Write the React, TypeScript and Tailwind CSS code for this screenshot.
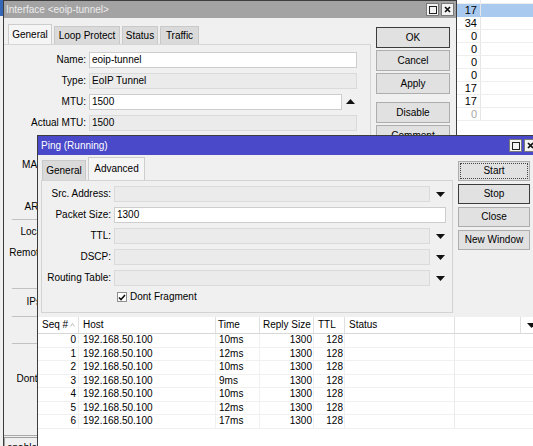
import React from 'react';

const font = "font-['Liberation_Sans',Arial,sans-serif]";

function WinControls() {
  return (
    <div className="flex gap-[2px]">
      <div className="w-[13px] h-[13px] bg-[#f3f3f3] border border-[#7a7a7a] flex items-center justify-center">
        <div className="w-[8px] h-[8px] border border-[#222]" />
      </div>
      <div className="w-[13px] h-[13px] bg-[#f3f3f3] border border-[#7a7a7a] flex items-center justify-center">
        <svg width="7" height="7" viewBox="0 0 7 7">
          <path d="M1 1L6 6M6 1L1 6" stroke="#111" strokeWidth="1.7" />
        </svg>
      </div>
    </div>
  );
}

function DownArrow() {
  return (
    <svg width="9" height="5" viewBox="0 0 9 5">
      <path d="M0 0h9L4.5 5z" fill="#111" />
    </svg>
  );
}

function Btn({ label, kind = 'normal', h = 'h-[21px]' }: { label: string; kind?: 'normal' | 'default' | 'focus'; h?: string }) {
  const border = kind === 'default' ? 'border-[#3c3c3c]' : 'border-[#adadad]';
  return (
    <div className={`${h} bg-[#e1e1e1] border ${border} flex items-center justify-center p-[1px]`}>
      {kind === 'focus' ? (
        <div className="w-full h-full border border-dotted border-[#444] flex items-center justify-center">{label}</div>
      ) : (
        label
      )}
    </div>
  );
}

function Field({ value = '', w, white = false }: { value?: string; w: string; white?: boolean }) {
  return (
    <div
      className={`${w} h-[16px] flex items-center px-[2px] border ${
        white ? 'bg-white border-[#cdcdcd]' : 'bg-[#ebebeb] border-[#dadada]'
      }`}
    >
      {value}
    </div>
  );
}

const sideRows = [
  { v: '17', sel: true },
  { v: '34' },
  { v: '0' },
  { v: '0' },
  { v: '0' },
  { v: '0' },
  { v: '17' },
  { v: '17' },
  { v: '0', dim: true },
];

function SideList() {
  return (
    <div className="absolute left-[457px] top-0 w-[76px] h-[140px] bg-white flex flex-col text-[11px]">
      <div className="h-[4px] border-b border-[#eeeeee] flex">
        <div className="w-[24px] border-r border-[#e6e6e6]" />
      </div>
      {sideRows.map((r, i) => (
        <div key={i} className={`flex h-[13px] border-b ${r.sel ? 'bg-[#a9c9ef] border-[#a9c9ef]' : 'border-[#eeeeee]'}`}>
          <div
            className={`w-[24px] flex items-center justify-end pr-[3px] border-r border-[#e6e6e6] ${
              r.dim ? 'text-[#a8a8a8]' : ''
            }`}
          >
            {r.v}
          </div>
        </div>
      ))}
    </div>
  );
}

function Row({ label = '', children }: { label?: string; children?: React.ReactNode }) {
  return (
    <div className="flex items-center h-[21px]">
      <div className="w-[82px] text-right whitespace-nowrap">{label}</div>
      <div className="ml-[3px] flex items-center">{children}</div>
    </div>
  );
}

function Sep({ pt }: { pt: string }) {
  return (
    <div className={`h-[7px] ${pt}`}>
      <div className="ml-[8px] w-[352px] border-t border-[#c2c2c2]" />
    </div>
  );
}

function InterfaceWindow() {
  return (
    <div className="absolute left-[3px] top-0 w-[454px] h-[460px] border border-[#3d3d3d] bg-[#f0f0f0] flex flex-col">
      <div className="h-[17px] shrink-0 bg-[#a3a3a3] flex items-center pl-[2px] pr-[2px]">
        <span className="flex-1 text-[#ececec]">Interface &lt;eoip-tunnel&gt;</span>
        <WinControls />
      </div>
      <div className="flex">
        <div className="flex-1 flex flex-col">
          <div className="mt-[6px] h-[20px] flex items-end gap-[2px] pl-[4px]">
            <div className="w-[44px] h-[20px] bg-[#f5f5f5] border border-b-0 border-[#cdcdcd] flex items-center justify-center">General</div>
            <div className="w-[66px] h-[18px] bg-[#dadada] border border-b-0 border-[#c9c9c9] flex items-center justify-center">Loop Protect</div>
            <div className="w-[36px] h-[18px] bg-[#dadada] border border-b-0 border-[#c9c9c9] flex items-center justify-center">Status</div>
            <div className="w-[39px] h-[18px] bg-[#dadada] border border-b-0 border-[#c9c9c9] flex items-center justify-center">Traffic</div>
          </div>
          <div className="mr-[5px] border-t border-r border-[#d6d6d6] pt-[4px] flex flex-col">
            <Row label="Name:">
              <Field w="w-[268px]" white value="eoip-tunnel" />
            </Row>
            <Row label="Type:">
              <Field w="w-[268px]" value="EoIP Tunnel" />
            </Row>
            <Row label="MTU:">
              <Field w="w-[253px]" white value="1500" />
              <div className="w-[16px] flex justify-center">
                <svg width="9" height="5" viewBox="0 0 9 5">
                  <path d="M0 5h9L4.5 0z" fill="#111" />
                </svg>
              </div>
            </Row>
            <Row label="Actual MTU:">
              <Field w="w-[268px]" value="1500" />
            </Row>
            {/* rows below sit behind the Ping window; only their label starts show */}
            <Row />
            <Row label="MAC Address:" />
            <Row />
            <Row label="ARP Timeout:" />
            <div className="h-[4px] pt-[2px]">
              <div className="ml-[8px] w-[352px] border-t border-[#c2c2c2]" />
            </div>
            <Row label="Local Address:" />
            <Row label="Remote Address:" />
            <Row />
            <Sep pt="pt-[4px]" />
            <Row label="IPsec Secret:" />
            <Sep pt="pt-[4px]" />
            <Row />
            <Sep pt="pt-[3px]" />
            <Row />
            <Row label="Dont Fragment:" />
          </div>
        </div>
        <div className="w-[74px] mr-[6px] mt-[9px] flex flex-col gap-[2px]">
          <Btn label="OK" kind="default" />
          <Btn label="Cancel" />
          <Btn label="Apply" />
          <div className="mt-[6px]">
            <Btn label="Disable" />
          </div>
          <Btn label="Comment" />
        </div>
      </div>
      <div className="mt-auto h-[24px] border-t border-[#a8a8a8] pt-[1px]">
        <div className="w-[34px] h-[20px] border border-[#a0a0a0] pl-[2px] pt-[5px] overflow-hidden">enabled</div>
      </div>
    </div>
  );
}

const pings = [
  { s: '0', t: '10ms' },
  { s: '1', t: '12ms' },
  { s: '2', t: '10ms' },
  { s: '3', t: '9ms' },
  { s: '4', t: '10ms' },
  { s: '5', t: '12ms' },
  { s: '6', t: '17ms' },
];

function PingRow({ label, children }: { label: string; children: React.ReactNode }) {
  return (
    <div className="flex items-center h-[16px]">
      <div className="w-[69px] text-right whitespace-nowrap">{label}</div>
      <div className="ml-[3px] flex items-center">{children}</div>
    </div>
  );
}

function Combo() {
  return (
    <>
      <Field w="w-[316px]" />
      <div className="w-[20px] flex justify-center">
        <DownArrow />
      </div>
    </>
  );
}

function PingWindow() {
  return (
    <div className="absolute left-[37px] top-[135px] w-[510px] h-[330px] border border-[#3d3d3d] bg-[#f0f0f0] flex flex-col">
      <div className="h-[19px] shrink-0 bg-[#4949c9] flex items-center pl-[3px] pr-[9px]">
        <span className="flex-1 text-white">Ping (Running)</span>
        <WinControls />
      </div>
      <div className="flex">
        <div className="ml-[3px] w-[412px] flex flex-col">
          <div className="h-[25px] flex items-end gap-[2px] pl-[1px]">
            <div className="w-[44px] h-[20px] bg-[#dadada] border border-b-0 border-[#c9c9c9] flex items-center justify-center">General</div>
            <div className="w-[57px] h-[23px] bg-[#f5f5f5] border border-b-0 border-[#cdcdcd] flex items-center justify-center">Advanced</div>
          </div>
          <div className="h-[133px] border border-[#d3d3d3] pt-[5px] flex flex-col gap-[5px]">
            <PingRow label="Src. Address:">
              <Combo />
            </PingRow>
            <PingRow label="Packet Size:">
              <Field w="w-[332px]" white value="1300" />
            </PingRow>
            <PingRow label="TTL:">
              <Combo />
            </PingRow>
            <PingRow label="DSCP:">
              <Combo />
            </PingRow>
            <PingRow label="Routing Table:">
              <Combo />
            </PingRow>
            <div className="mt-[1px] ml-[75px] flex items-center gap-[3px]">
              <div className="w-[10px] h-[10px] bg-white border border-[#8f8f8f] flex items-center justify-center">
                <svg width="8" height="7" viewBox="0 0 8 7">
                  <path d="M1 3.5L3 5.5L7 1" stroke="#111" strokeWidth="1.6" fill="none" />
                </svg>
              </div>
              <span>Dont Fragment</span>
            </div>
          </div>
        </div>
        <div className="ml-[5px] w-[72px] mt-[6px] flex flex-col gap-[3px]">
          <Btn label="Start" kind="focus" h="h-[20px]" />
          <Btn label="Stop" kind="default" h="h-[20px]" />
          <Btn label="Close" h="h-[20px]" />
          <Btn label="New Window" h="h-[20px]" />
        </div>
      </div>
      <div className="mt-[4px] flex-1 bg-white flex flex-col">
        <div className="h-[17px] flex border-b border-[#d8d8d8]">
          <div className="w-[41px] flex items-center justify-between pl-[4px] pr-[3px] border-r border-[#e0e0e0]">
            <span>Seq #</span>
            <svg width="5" height="4" viewBox="0 0 5 4">
              <path d="M0.5 3.5L2.5 0.5L4.5 3.5" stroke="#bdbdbd" fill="none" />
            </svg>
          </div>
          <div className="w-[137px] flex items-center pl-[4px] border-r border-[#e0e0e0]">Host</div>
          <div className="w-[44px] flex items-center pl-[2px] border-r border-[#e0e0e0]">Time</div>
          <div className="w-[54px] flex items-center pl-[3px] border-r border-[#e0e0e0]">Reply Size</div>
          <div className="w-[31px] flex items-center pl-[4px] border-r border-[#e0e0e0]">TTL</div>
          <div className="w-[110px] flex items-center pl-[4px] border-r border-[#e0e0e0]">Status</div>
          <div className="w-[66px] border-r border-[#e0e0e0]" />
          <div className="flex-1 flex items-center pl-[6px]">
            <DownArrow />
          </div>
        </div>
        {pings.map((p) => (
          <div key={p.s} className="h-[13.5px] flex border-b border-[#f0f0f0]">
            <div className="w-[41px] flex items-center justify-end pr-[2px] border-r border-[#f0f0f0]">{p.s}</div>
            <div className="w-[137px] flex items-center pl-[4px] border-r border-[#f0f0f0]">192.168.50.100</div>
            <div className="w-[44px] flex items-center pl-[3px] border-r border-[#f0f0f0]">{p.t}</div>
            <div className="w-[54px] flex items-center justify-end pr-[1px] border-r border-[#f0f0f0]">1300</div>
            <div className="w-[31px] flex items-center justify-end pr-[1px] border-r border-[#f0f0f0]">128</div>
            <div className="w-[110px] border-r border-[#ebebeb]" />
          </div>
        ))}
      </div>
    </div>
  );
}

export default function App() {
  return (
    <div className={`relative w-[533px] h-[446px] overflow-hidden bg-white text-[10px] leading-none text-black ${font}`}>
      <div className="absolute left-0 top-0 w-[3px] h-full bg-[#f0f0f0]">
        <div className="h-[16px] bg-[#3467b8]" />
      </div>
      <SideList />
      <InterfaceWindow />
      <PingWindow />
    </div>
  );
}
